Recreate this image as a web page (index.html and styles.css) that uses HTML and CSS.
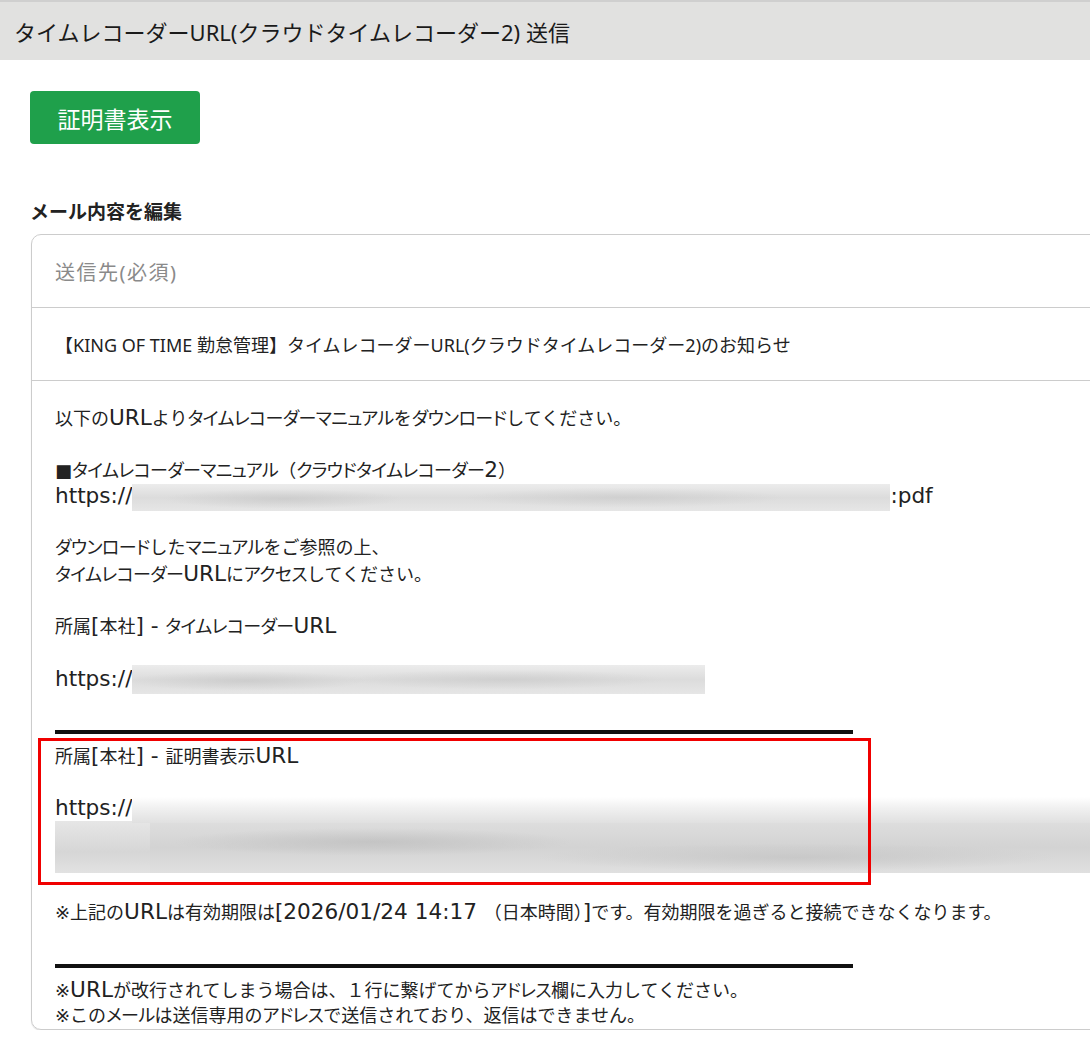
FILE: index.html
```html
<!DOCTYPE html>
<html lang="ja">
<head>
    <meta charset="UTF-8" />
    <meta name="viewport" content="width=device-width, initial-scale=1.0"/>
    <title>タイムレコーダーURL送信</title>
    <link rel="stylesheet" href="styles.css">
</head>
<body>
<div class="page-header">
    <h1>タイムレコーダーURL(クラウドタイムレコーダー2) 送信</h1>
</div>

<div class="content">
    <button type="button" class="btn-cert">証明書表示</button>

    <h2>メール内容を編集</h2>
    <div class="mail-card">
        <div class="mail-row placeholder">送信先(必須)</div>
        <div class="mail-row">【KING OF TIME 勤怠管理】タイムレコーダーURL(クラウドタイムレコーダー2)のお知らせ</div>
        <div class="mail-body">
            <p class="ln">以下の<span class="en">URL</span>より<span class="kt">タイムレコーダーマニュアル</span>を<span class="kt">ダウンロード</span>してください。</p>
            <p class="ln"></p>
            <p class="ln">■<span class="kt">タイムレコーダーマニュアル</span>（<span class="kt">クラウドタイムレコーダー</span><span class="en">2</span>）</p>
            <p class="ln"><span class="en">https://</span><span class="blur blur-pdf"></span><span class="en">:pdf</span></p>
            <p class="ln"></p>
            <p class="ln"><span class="kt">ダウンロード</span>した<span class="kt">マニュアル</span>をご参照の上、</p>
            <p class="ln"><span class="kt">タイムレコーダー</span><span class="en">URL</span>に<span class="kt">アクセス</span>してください。</p>
            <p class="ln"></p>
            <p class="ln">所属<span class="en">[</span>本社<span class="en">] - </span><span class="kt">タイムレコーダー</span><span class="en">URL</span></p>
            <p class="ln"></p>
            <p class="ln"><span class="en">https://</span><span class="blur blur-rec"></span></p>
            <p class="ln"></p>
            <p class="ln"><span class="rule"></span></p>
            <p class="ln">所属<span class="en">[</span>本社<span class="en">] - </span>証明書表示<span class="en">URL</span></p>
            <p class="ln"></p>
            <p class="ln"><span class="en">https://</span><span class="blur blur-cert"></span></p>
            <div class="blur-block">
                <span class="blur-left"></span>
            </div>
            <p class="ln"></p>
            <p class="ln">※上記の<span class="en">URL</span>は有効期限は<span class="en">[2026/01/24 14:17 </span>（日本時間）<span class="en">]</span>です。有効期限を過ぎると接続できなくなります。</p>
            <p class="ln"></p>
            <p class="ln"><span class="rule"></span></p>
            <p class="ln">※<span class="en">URL</span>が改行されてしまう場合は、１行に繋げてから<span class="kt">アドレス</span>欄に入力してください。</p>
            <p class="ln">※この<span class="kt">メール</span>は送信専用の<span class="kt">アドレス</span>で送信されており、返信はできません。</p>

            <div class="highlight"></div>
        </div>
    </div>
</div>
</body>
</html>
```

FILE: styles.css
```css
body {
    font-family: 'Noto Sans', 'Noto Sans CJK JP', sans-serif;
    color: #222;
    background: #ffffff;
    margin: 0;
    padding: 0;
    overflow-x: hidden;
}
.page-header {
    background: #e1e1e0;
    border-top: 2px solid #cfcfcf;
    height: 58px;
    display: flex;
    align-items: center;
    padding-left: 14px;
}
.page-header h1 {
    margin: 0;
    font-size: 22px;
    font-weight: 400;
    color: #1a1a1a;
}
.content {
    padding: 31px 0 0 30px;
}
.btn-cert {
    display: block;
    height: 53px;
    width: 170px;
    background: #1fa04b;
    color: white;
    border: none;
    border-radius: 4px;
    font-family: inherit;
    font-size: 23px;
    cursor: pointer;
}
h2 {
    margin: 55px 0 9px 0;
    font-size: 19px;
    line-height: 26px;
    font-weight: 700;
    color: #222;
}
.mail-card {
    margin-left: 1px;
    width: 1120px;
    border: 1px solid #cccccc;
    border-radius: 10px;
    box-shadow: 0 1px 1px rgba(0, 0, 0, 0.12);
}
.mail-row {
    height: 72px;
    display: flex;
    align-items: center;
    padding-left: 23px;
    font-size: 18px;
    border-bottom: 1px solid #cccccc;
}
.mail-row.placeholder {
    color: #8a8a8a;
    font-size: 20px;
    letter-spacing: 1.5px;
}
.mail-body {
    position: relative;
    padding: 24px 0 0 23px;
    overflow: hidden;
    border-radius: 0 0 10px 10px;
}
.ln {
    display: flow-root;
    margin: 0;
    height: 26px;
    line-height: 26px;
    font-family: 'DejaVu Sans', 'Noto Sans CJK JP', sans-serif;
    font-size: 18px;
    white-space: nowrap;
}
.en {
    font-size: 1.2em;
}
.kt {
    font-feature-settings: "palt";
    letter-spacing: -0.6px;
}
.blur {
    display: inline-block;
    height: 27px;
    vertical-align: -8px;
    background:
        radial-gradient(ellipse 120px 10px at 20% 55%, rgba(190, 190, 190, 0.5), transparent),
        radial-gradient(ellipse 160px 10px at 65% 50%, rgba(195, 195, 195, 0.5), transparent),
        linear-gradient(#ececec, #dcdcdc 50%, #e6e6e6);
}
.blur-pdf {
    width: 758px;
}
.blur-rec {
    width: 573px;
    height: 29px;
}
.blur-cert {
    width: 990px;
    height: 26px;
    vertical-align: -8px;
    background: linear-gradient(#ffffff, #f1f1f1 40%, #e0e0e0);
}
.blur-block {
    height: 52px;
    width: 1060px;
    background:
        radial-gradient(ellipse 200px 14px at 30% 40%, rgba(185, 185, 185, 0.6), transparent),
        radial-gradient(ellipse 260px 14px at 70% 70%, rgba(190, 190, 190, 0.6), transparent),
        linear-gradient(#dedede, #d3d3d3 50%, #e0e0e0);
}
.blur-left {
    display: block;
    width: 95px;
    height: 52px;
    background: linear-gradient(#e6e6e6, #d6d6d6 60%, #e2e2e2);
}
.rule {
    display: block;
    width: 798px;
    height: 4px;
    margin-top: 13px;
    background: #111;
}
.highlight {
    position: absolute;
    top: 357px;
    left: 6px;
    width: 827px;
    height: 141px;
    border: 3px solid #f00000;
}
```
